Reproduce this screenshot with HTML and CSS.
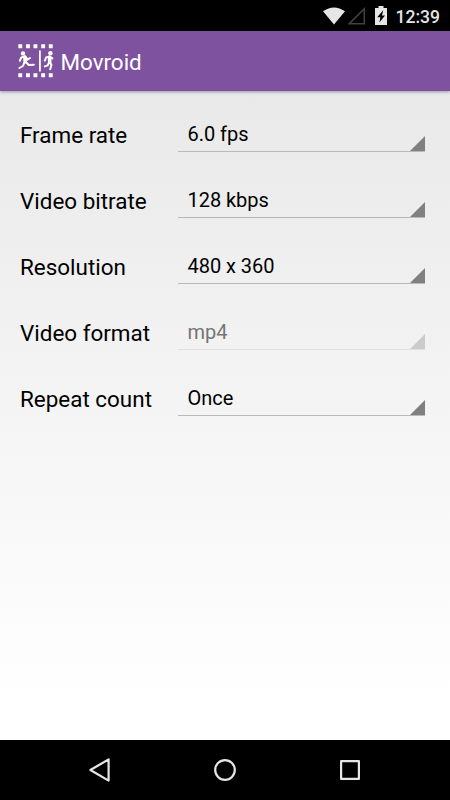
FILE: index.html
```html
<!DOCTYPE html>
<html lang="en">
<head>
    <meta charset="UTF-8">
    <meta name="viewport" content="width=device-width, initial-scale=1.0">
    <title>Movroid</title>
    <link rel="stylesheet" href="styles.css">
</head>
<body>
    <div class="status-bar">
        <svg class="wifi" width="22" height="18" viewBox="0 0 22 18"><path d="M0 4.2Q11-3.4 22 4.2L11 17.5Z" fill="#e6e6e6"/></svg>
        <svg class="signal" width="18" height="18" viewBox="0 0 18 18"><path d="M1.2 16.8H16.3V1.8Z" fill="none" stroke="#414141" stroke-width="1.6"/></svg>
        <svg class="battery" width="12" height="19" viewBox="0 0 12 19">
            <path d="M3.5 0h5v2H12v17H0V2h3.5Z" fill="#e6e6e6"/>
            <path d="M8.2 4.2L2.2 11.2h3.2L4.4 16.6L10 9.6h-3Z" fill="#000"/>
        </svg>
        <span class="clock">12:39</span>
    </div>
    <header>
        <svg class="logo" width="36" height="34" viewBox="0 0 36 34" fill="#fff">
            <path d="M.3.3h3.9v3.9H.3ZM8 .3h3.9v3.9H8ZM15.5.3h3.9v3.9h-3.9ZM23.2.3h3.9v3.9h-3.9ZM30.8.3h3.9v3.9h-3.9Z"/>
            <path d="M.3 29.3h3.9v3.9H.3ZM8 29.3h3.9v3.9H8ZM15.5 29.3h3.9v3.9h-3.9ZM23.2 29.3h3.9v3.9h-3.9ZM30.8 29.3h3.9v3.9h-3.9Z"/>
            <rect x="21" y="6.5" width="1.8" height="21"/>
            <circle cx="5" cy="9.4" r="2.2"/>
            <g fill="none" stroke="#fff" stroke-width="2" stroke-linecap="round" stroke-linejoin="round">
                <path d="M1.8 16.8L3.4 13.4L7 12.2L9.6 15.6L12 14"/>
                <path d="M6.9 13.2L7.2 17.6" stroke-width="3.6"/>
                <path d="M6.3 18.5L5 22L1.4 24M7.9 18.2L10.8 21L15.8 20.8"/>
                <path d="M26.8 16.6L28.2 13.4L31.4 12.4L34.4 14.4"/>
                <path d="M31.6 13.2L31.7 17.8" stroke-width="3.6"/>
                <path d="M30.9 18.6L29.8 21.4L26.8 22.4M32.2 18.4L33.4 21L32.2 25.2"/>
            </g>
            <circle cx="32.4" cy="9.2" r="2.2"/>
        </svg>
        <h1>Movroid</h1>
    </header>
    <div class="container">
        <div class="form-item">
            <span class="form-label">Frame rate</span>
            <div class="spinner">6.0 fps</div>
        </div>
        <div class="form-item">
            <span class="form-label">Video bitrate</span>
            <div class="spinner">128 kbps</div>
        </div>
        <div class="form-item">
            <span class="form-label">Resolution</span>
            <div class="spinner">480 x 360</div>
        </div>
        <div class="form-item">
            <span class="form-label">Video format</span>
            <div class="spinner disabled">mp4</div>
        </div>
        <div class="form-item">
            <span class="form-label">Repeat count</span>
            <div class="spinner">Once</div>
        </div>
    </div>
    <nav class="nav-bar">
        <svg width="24" height="26" viewBox="0 0 24 26"><path d="M20.6 2.4V23.6L2.4 13Z"/></svg>
        <svg width="24" height="26" viewBox="0 0 24 26"><circle cx="12" cy="13" r="9.8"/></svg>
        <svg width="24" height="26" viewBox="0 0 24 26"><path d="M3.1 4.1H20.9V21.9H3.1Z"/></svg>
    </nav>
</body>
</html>
```

FILE: styles.css
```css
* {
    margin: 0;
    padding: 0;
    box-sizing: border-box;
}

body {
    display: flex;
    flex-direction: column;
    height: 800px;
    font-family: Roboto, sans-serif;
    background-color: #fff;
    color: #000;
    overflow: hidden;
}

.status-bar {
    display: flex;
    align-items: center;
    justify-content: flex-end;
    height: 31px;
    padding-right: 10px;
    background-color: #000;
}

.signal {
    margin-left: 3px;
}

.battery {
    margin-left: 9px;
}

.clock {
    margin-left: 9px;
    padding-top: 2px;
    font-size: 17.5px;
    font-weight: 500;
    color: #e6e6e6;
}

header {
    display: flex;
    align-items: center;
    height: 60px;
    padding-left: 18px;
    background-color: #7e529f;
    box-shadow: 0 1px 3px rgba(0, 0, 0, 0.35);
    z-index: 1;
}

.logo {
    margin-right: 6.5px;
}

h1 {
    padding-top: 2px;
    font-size: 22.4px;
    font-weight: 400;
    color: #fff;
}

.container {
    flex: 1;
    padding: 11px 25px 0 20px;
    background: linear-gradient(#e9e9e9, #fff 95%);
}

.form-item {
    display: flex;
    align-items: center;
    height: 66px;
}

.form-label {
    width: 157.5px;
    padding-bottom: 1px;
    font-size: 22.45px;
}

.spinner {
    flex: 1;
    height: 34px;
    padding: 4px 10px 0;
    font-size: 20px;
    line-height: 25px;
    letter-spacing: -0.04px;
    border-bottom: 1px solid #b9b9b9;
    /* corner arrow */
    background: linear-gradient(135deg, transparent 48%, #808080 52%) right bottom / 16px 16px no-repeat border-box;
}

.disabled {
    color: #757575;
    border-bottom-color: #e0e0e0;
    background-image: linear-gradient(135deg, transparent 48%, #cbcbcb 52%);
}

.nav-bar {
    display: flex;
    align-items: center;
    justify-content: center;
    gap: 101px;
    height: 60px;
    background-color: #000;
}

.nav-bar svg {
    fill: none;
    stroke: #e6e6e6;
    stroke-width: 2.2;
    stroke-linejoin: round;
}
```
